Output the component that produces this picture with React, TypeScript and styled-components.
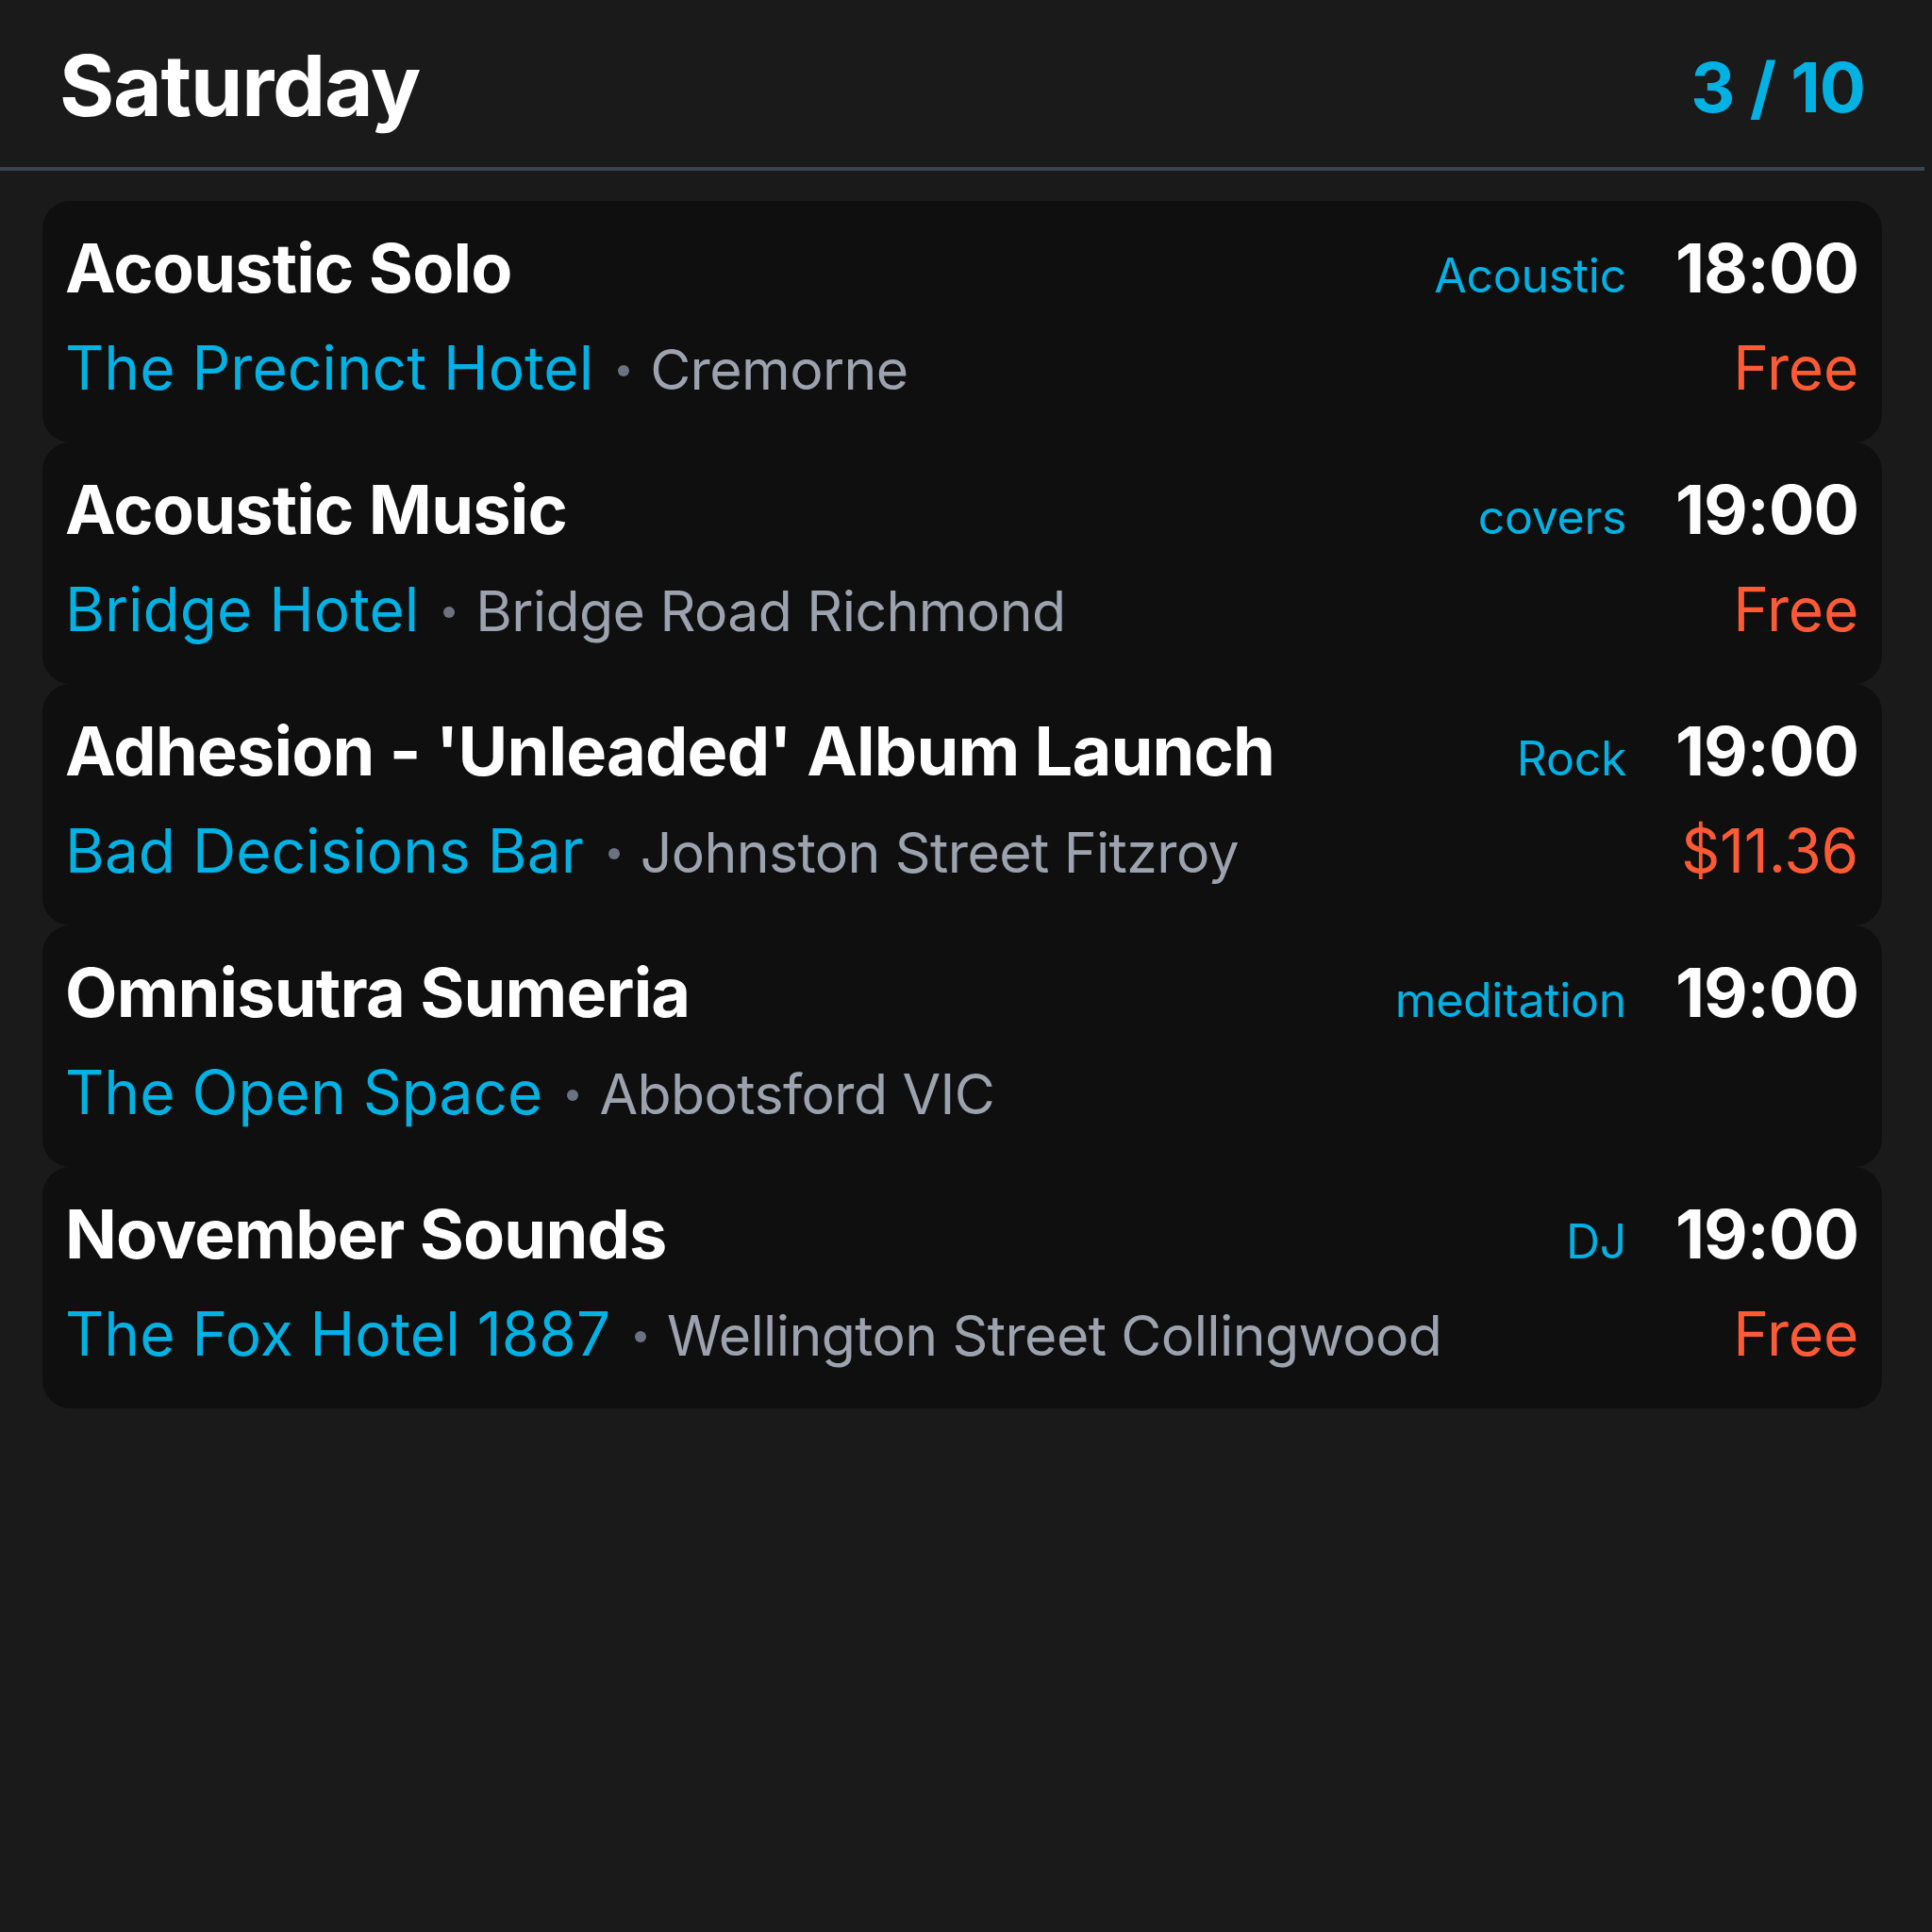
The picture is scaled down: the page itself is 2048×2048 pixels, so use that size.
import React from "react";
import styled, { createGlobalStyle } from "styled-components";

const GlobalStyle = createGlobalStyle`
  html, body {
    margin: 0;
    padding: 0;
    background: #1a1a1a;
  }
  body {
    font-family: Inter, "Noto Sans", "Liberation Sans", sans-serif;
    -webkit-font-smoothing: antialiased;
  }
`;

const Page = styled.div`
  width: 2040px;
  min-height: 2048px;
  background: #1a1a1a;
`;

const Header = styled.header`
  box-sizing: border-box;
  height: 181px;
  padding: 6px 63px 0 63px;
  display: flex;
  align-items: center;
  justify-content: space-between;
  border-bottom: 4px solid #3a4352;
`;

const DayTitle = styled.h1`
  margin: 0;
  font-size: 89px;
  font-weight: 700;
  color: #ffffff;
  letter-spacing: -1.2px;
  line-height: 1.2;
`;

const Counter = styled.div`
  font-size: 73px;
  font-weight: 700;
  color: #00b1e3;
  letter-spacing: -1px;
  line-height: 1.2;
  margin-top: 2px;
`;

const List = styled.div`
  padding: 32px 45px;
  display: flex;
  flex-direction: column;
`;

const Card = styled.div`
  box-sizing: border-box;
  height: 256px;
  background: #0f0f0f;
  border-radius: 30px;
  padding: 21px 25px 29px 24px;
  display: flex;
  flex-direction: column;
  gap: 6px;
`;

const Row = styled.div`
  display: flex;
  align-items: baseline;
  justify-content: space-between;
  height: 100px;
  line-height: 100px;
  white-space: nowrap;
`;

const Title = styled.div`
  font-size: 72px;
  font-weight: 700;
  color: #ffffff;
  letter-spacing: -0.8px;
`;

const RightGroup = styled.div`
  display: flex;
  align-items: baseline;
  gap: 52px;
`;

const Genre = styled.span`
  font-size: 50px;
  font-weight: 400;
  color: #00b1e3;
  letter-spacing: -0.3px;
`;

const Time = styled.span`
  font-size: 72px;
  font-weight: 700;
  color: #ffffff;
  letter-spacing: -1px;
`;

const Place = styled.div`
  display: flex;
  align-items: baseline;
`;

const Venue = styled.span`
  font-size: 64px;
  font-weight: 400;
  color: #00b1e3;
  letter-spacing: 0;
`;

const Dot = styled.span`
  display: inline-block;
  width: 12px;
  height: 12px;
  border-radius: 50%;
  background: #6b7280;
  margin: 0 22px 0 26px;
  align-self: center;
  transform: translateY(2px);
`;

const Location = styled.span`
  font-size: 59px;
  font-weight: 400;
  color: #9ca3af;
  letter-spacing: -0.6px;
`;

const Price = styled.span`
  font-size: 64px;
  font-weight: 400;
  color: #ff5a36;
  letter-spacing: -0.2px;
`;

type EventItem = {
  title: string;
  genre: string;
  time: string;
  venue: string;
  location: string;
  price?: string;
};

const events: EventItem[] = [
  { title: "Acoustic Solo", genre: "Acoustic", time: "18:00", venue: "The Precinct Hotel", location: "Cremorne", price: "Free" },
  { title: "Acoustic Music", genre: "covers", time: "19:00", venue: "Bridge Hotel", location: "Bridge Road Richmond", price: "Free" },
  { title: "Adhesion - 'Unleaded' Album Launch", genre: "Rock", time: "19:00", venue: "Bad Decisions Bar", location: "Johnston Street Fitzroy", price: "$11.36" },
  { title: "Omnisutra Sumeria", genre: "meditation", time: "19:00", venue: "The Open Space", location: "Abbotsford VIC" },
  { title: "November Sounds", genre: "DJ", time: "19:00", venue: "The Fox Hotel 1887", location: "Wellington Street Collingwood", price: "Free" },
];

export default function App() {
  return (
    <>
      <GlobalStyle />
      <Page>
        <Header>
          <DayTitle>Saturday</DayTitle>
          <Counter>3 / 10</Counter>
        </Header>
        <List>
          {events.map((e) => (
            <Card key={e.title}>
              <Row>
                <Title>{e.title}</Title>
                <RightGroup>
                  <Genre>{e.genre}</Genre>
                  <Time>{e.time}</Time>
                </RightGroup>
              </Row>
              <Row>
                <Place>
                  <Venue>{e.venue}</Venue>
                  <Dot />
                  <Location>{e.location}</Location>
                </Place>
                {e.price ? <Price>{e.price}</Price> : null}
              </Row>
            </Card>
          ))}
        </List>
      </Page>
    </>
  );
}
